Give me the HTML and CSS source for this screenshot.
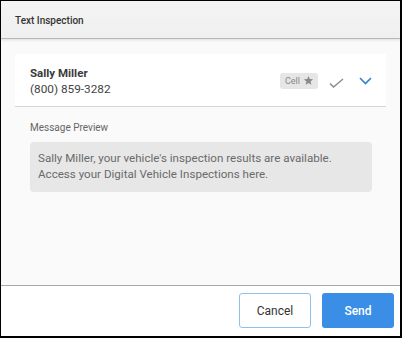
FILE: index.html
```html
<!DOCTYPE html>
<html lang="en">
<head>
    <meta charset="UTF-8">
    <title>Text Inspection</title>
    <link rel="stylesheet" href="styles.css">
</head>
<body>
    <div class="dialog">
        <div class="dialog-header">
            <h1>Text Inspection</h1>
        </div>

        <div class="dialog-body">
            <div class="contact-card">
                <div class="contact-info">
                    <div class="contact-name">Sally Miller</div>
                    <div class="contact-phone">(800) 859-3282</div>
                </div>
                <div class="contact-actions">
                    <span class="phone-badge">Cell
                        <svg width="11" height="11" viewBox="0 0 24 24"><path fill="#8a8a8a" d="M12 17.27L18.18 21l-1.64-7.03L22 9.24l-7.19-.61L12 2 9.19 8.63 2 9.24l5.46 4.73L5.82 21z"/></svg>
                    </span>
                    <svg class="check-icon" width="15" height="10" viewBox="0 0 15 10"><polyline points="1,5.5 4.5,9 14,1" fill="none" stroke="#8a8a8a" stroke-width="1.4"/></svg>
                    <svg class="chevron-icon" width="13" height="8" viewBox="0 0 13 8"><polyline points="1,1 6.5,6.5 12,1" fill="none" stroke="#2f80d8" stroke-width="1.6"/></svg>
                </div>
            </div>

            <div class="preview">
                <div class="preview-label">Message Preview</div>
                <div class="preview-box">Sally Miller, your vehicle's inspection results are available. Access your Digital Vehicle Inspections here.</div>
            </div>
        </div>

        <div class="dialog-footer">
            <button class="btn btn-cancel">Cancel</button>
            <button class="btn btn-send">Send</button>
        </div>
    </div>
</body>
</html>
```

FILE: styles.css
```css
* {
    margin: 0;
    padding: 0;
    box-sizing: border-box;
    font-family: Roboto, "Liberation Sans", sans-serif;
}

body {
    width: 402px;
    height: 338px;
    overflow: hidden;
}

.dialog {
    width: 402px;
    height: 338px;
    border-style: solid;
    border-color: #000;
    border-width: 1px 2px 2px 1px;
    display: flex;
    flex-direction: column;
    background-color: #fafafa;
}

.dialog-header {
    height: 38px;
    background: linear-gradient(#f4f4f4, #efefef);
    border-bottom: 1px solid #b8b8b8;
    box-shadow: 0 1px 3px rgba(0, 0, 0, 0.12);
    padding: 0 14px;
    display: flex;
    align-items: center;
    position: relative;
}

.dialog-header h1 {
    font-size: 10px;
    font-weight: 500;
    color: #333;
    margin-top: 2px;
}

.dialog-body {
    flex: 1;
    padding: 15px 14px 0 14px;
}

.contact-card {
    background-color: #fff;
    border-bottom: 1px solid #d6d6d6;
    height: 53px;
    padding: 0 14px 0 15px;
    display: flex;
    align-items: center;
    justify-content: space-between;
}

.contact-info {
    margin-top: 1px;
}

.contact-name {
    font-size: 11.5px;
    font-weight: 700;
    color: #3a3a3a;
    line-height: 16px;
}

.contact-phone {
    font-size: 11.8px;
    color: #444;
    line-height: 16px;
}

.contact-actions {
    display: flex;
    align-items: center;
    margin-top: 1px;
}

.phone-badge {
    display: flex;
    align-items: center;
    gap: 3px;
    height: 16px;
    padding: 0 4px 0 5px;
    background-color: #e6e6e6;
    border-radius: 3px;
    font-size: 9px;
    color: #888;
}

.check-icon {
    margin-left: 11px;
    margin-top: 4px;
}

.chevron-icon {
    margin-left: 15px;
    margin-top: 1px;
}

.preview {
    padding: 0 14px 0 15px;
}

.preview-label {
    font-size: 10px;
    color: #666;
    margin-top: 14px;
    line-height: 14px;
}

.preview-box {
    margin-top: 7px;
    height: 50px;
    background-color: #e7e7e7;
    border-radius: 4px;
    padding: 8px 8px 0 8px;
    font-size: 11.6px;
    line-height: 16px;
    color: #6a6a6a;
}

.dialog-footer {
    height: 51px;
    background-color: #fff;
    border-top: 1px solid #a8a8a8;
    display: flex;
    justify-content: flex-end;
    gap: 11px;
    padding: 7px 6px 0 0;
}

.btn {
    width: 72px;
    height: 35px;
    border-radius: 3px;
    font-size: 12px;
    cursor: pointer;
}

.btn-cancel {
    background-color: #fff;
    border: 1px solid #8fc1ef;
    color: #333;
}

.btn-send {
    background-color: #3a8ee6;
    border: none;
    color: #fff;
    font-weight: 500;
}
```
